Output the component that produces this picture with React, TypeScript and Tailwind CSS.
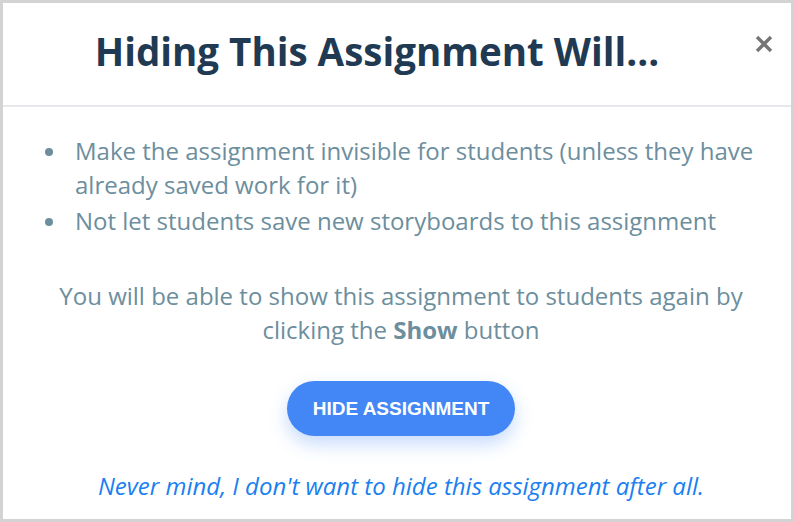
const items = [
  'Make the assignment invisible for students (unless they have already saved work for it)',
  'Not let students save new storyboards to this assignment',
]

export default function App() {
  return (
    <div className="w-[794px] h-[522px] bg-[#d3d3d3] p-[3px]">
      <div
        className="relative h-full bg-white flex flex-col"
        style={{ fontFamily: '"Open Sans", sans-serif' }}
      >
        {/* Header */}
        <div className="h-[104px] shrink-0 flex items-center justify-center border-b-2 border-[#e6e8eb] pr-[40px] pb-[6px]">
          <h1 className="text-[38.5px] leading-[50px] font-bold text-[#213a53]">Hiding This Assignment Will...</h1>
        </div>
        <button className="absolute right-[18px] top-[32px] text-[#777]" aria-label="Close">
          <svg width="18" height="18" viewBox="0 0 18 18" fill="none" stroke="currentColor" strokeWidth="3.4">
            <path d="M2 2L16 16M16 2L2 16" />
          </svg>
        </button>

        {/* Body */}
        <div className="flex flex-col items-center pl-[8px] text-[#6c8e9d] text-[24px] leading-[34px]">
          <ul className="self-start mt-[27px] ml-[34px] mr-[20px] flex flex-col gap-[2px]">
            {items.map((t) => (
              <li key={t} className="flex">
                <span className="w-[30px] shrink-0 flex pt-[14px]">
                  <span className="w-[8px] h-[8px] shrink-0 rounded-full bg-[#6c8e9d]" />
                </span>
                <span>{t}</span>
              </li>
            ))}
          </ul>
          <p className="mt-[41px] text-center px-[36px]">
            You will be able to show this assignment to students again by clicking the{' '}
            <b className="font-bold">Show</b> button
          </p>
          <button
            className="mt-[34px] w-[228px] h-[55px] rounded-full bg-[#4287f5] text-white text-[19px] font-bold shadow-[0_8px_18px_rgba(66,135,245,0.3)]"
            style={{ fontFamily: '"Liberation Sans", Arial, sans-serif' }}
          >
            HIDE ASSIGNMENT
          </button>
          <a className="mt-[33px] italic text-[#1a7ff0] cursor-pointer">
            Never mind, I don't want to hide this assignment after all.
          </a>
        </div>
      </div>
    </div>
  )
}
